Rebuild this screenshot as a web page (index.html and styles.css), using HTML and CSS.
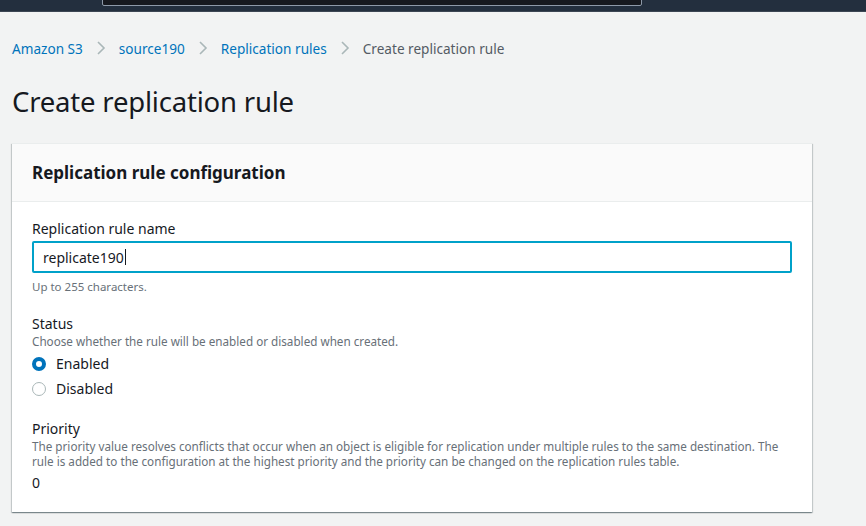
FILE: index.html
```html
<!DOCTYPE html>
<html>
<head>
<meta charset="utf-8">
<link rel="stylesheet" href="styles.css">
</head>
<body>
<header class="topbar">
  <div class="search"></div>
</header>
<main class="page">
  <nav class="crumbs">
    <a class="crumb link">Amazon S3</a>
    <svg class="chev" width="10" height="16" viewBox="0 0 10 16"><path d="M2 2l6 6-6 6" fill="none" stroke="#aab7b8" stroke-width="1.6"/></svg>
    <a class="crumb link">source190</a>
    <svg class="chev" width="10" height="16" viewBox="0 0 10 16"><path d="M2 2l6 6-6 6" fill="none" stroke="#aab7b8" stroke-width="1.6"/></svg>
    <a class="crumb link">Replication rules</a>
    <svg class="chev" width="10" height="16" viewBox="0 0 10 16"><path d="M2 2l6 6-6 6" fill="none" stroke="#aab7b8" stroke-width="1.6"/></svg>
    <span class="crumb current">Create replication rule</span>
  </nav>
  <h1 class="title">Create replication rule</h1>
  <section class="card">
    <div class="card-head">Replication rule configuration</div>
    <div class="card-body">
      <div class="field">
        <div class="label">Replication rule name</div>
        <div class="input"><span>replicate190</span><span class="caret"></span></div>
        <div class="hint">Up to 255 characters.</div>
      </div>
      <div class="field">
        <div class="label">Status</div>
        <div class="desc">Choose whether the rule will be enabled or disabled when created.</div>
        <div class="radios">
          <div class="radio"><span class="dot on"></span>Enabled</div>
          <div class="radio"><span class="dot"></span>Disabled</div>
        </div>
      </div>
      <div class="field field-priority">
        <div class="label">Priority</div>
        <div class="desc">The priority value resolves conflicts that occur when an object is eligible for replication under multiple rules to the same destination. The rule is added to the configuration at the highest priority and the priority can be changed on the replication rules table.</div>
        <div class="value">0</div>
      </div>
    </div>
  </section>
</main>
</body>
</html>
```
FILE: styles.css
```css
* { box-sizing: border-box; }
html, body { margin: 0; padding: 0; }
body {
  background: #f2f3f3;
  font-family: "Noto Sans", "Open Sans", sans-serif;
  color: #16191f;
  width: 866px;
  height: 526px;
  overflow: hidden;
}
.topbar {
  height: 12px;
  background: #232f3e;
  border-bottom: 1px solid #3c4653;
  position: relative;
}
.search {
  position: absolute;
  left: 102px;
  top: -2px;
  width: 540px;
  height: 8px;
  background: #16191f;
  border: 1px solid #8d99a8;
  border-radius: 2px;
}
.page { padding: 0 54px 0 12px; }
.crumbs {
  display: flex;
  align-items: center;
  gap: 11px;
  height: 24px;
  margin-top: 24px;
  font-size: 13.6px;
}
.crumb.link { color: #0073bb; }
.crumb.current { color: #545b64; }
.chev { margin: 0 2px; }
.title {
  margin: 24px 0 0;
  font-size: 27.5px;
  font-weight: 400;
  line-height: 36px;
  color: #16191f;
  letter-spacing: -0.2px;
}
.card {
  margin-top: 23px;
  width: 800px;
  background: #fff;
  border-top: 1px solid #eaeded;
  box-shadow: 0 1px 1px 0 rgba(0,28,36,.3), 1px 1px 1px 0 rgba(0,28,36,.15), -1px 1px 1px 0 rgba(0,28,36,.15);
}
.card-head {
  background: #fafafa;
  border-bottom: 1px solid #eaeded;
  height: 58px;
  padding: 0 20px;
  display: flex;
  align-items: center;
  font-size: 17px;
  font-weight: 700;
}
.card-body { padding: 17px 20px 19px; }
.field + .field { margin-top: 19px; }
.field + .field-priority { margin-top: 20px; }
.label { font-size: 14px; line-height: 20px; }
.input {
  margin-top: 2px;
  height: 32px;
  border: 2px solid #00a1c9;
  border-radius: 2px;
  padding: 0 9px;
  display: flex;
  align-items: center;
  font-size: 14px;
  color: #16191f;
}
.caret { width: 1px; height: 16px; background: #16191f; margin-left: 1px; }
.hint { margin-top: 6px; font-size: 11.5px; color: #687078; line-height: 16px; }
.desc { font-size: 11.7px; color: #687078; line-height: 15px; }
.radios { margin-top: 5px; display: flex; flex-direction: column; gap: 5px; }
.radio {
  display: flex;
  align-items: center;
  gap: 10px;
  font-size: 14px;
  line-height: 20px;
}
.dot {
  width: 14px;
  height: 14px;
  border-radius: 50%;
  border: 1px solid #aab7b8;
  background: #fff;
}
.dot.on { border: 4px solid #0073bb; }
.value { margin-top: 4px; font-size: 14px; line-height: 20px; }
```
